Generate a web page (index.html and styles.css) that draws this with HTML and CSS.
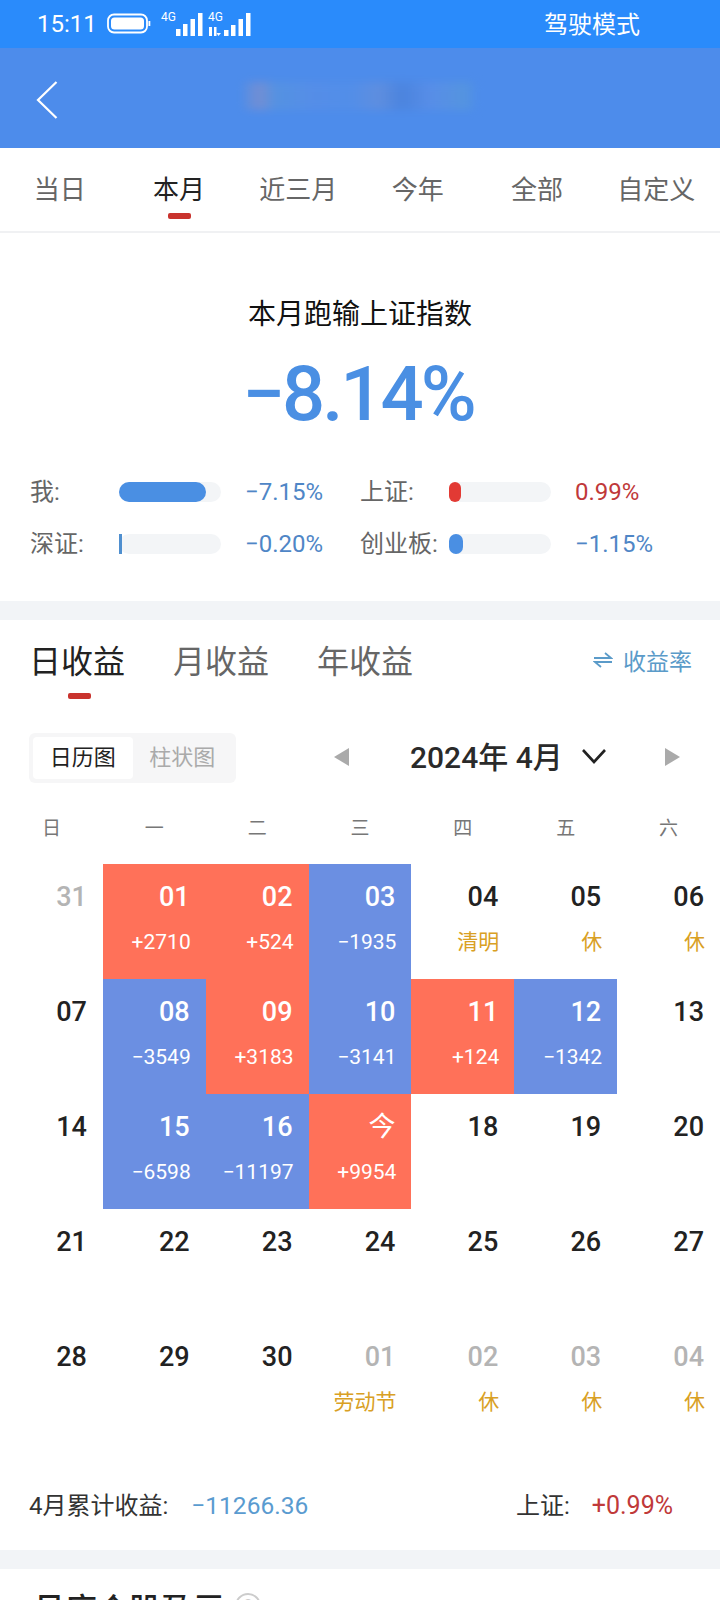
FILE: index.html
```html
<!DOCTYPE html>
<html lang="zh-CN">
<head>
<meta charset="UTF-8">
<meta name="viewport" content="width=device-width, initial-scale=1.0">
<title>收益日历</title>
<link rel="stylesheet" href="styles.css">
</head>
<body>
<div class="page">
    <div class="status-bar">
        <span class="time">15:11</span>
        <svg class="status-icons" width="146" height="26" viewBox="0 0 146 26">
            <rect x="1" y="3.5" width="39" height="18" rx="6" fill="none" stroke="#fff" stroke-width="1.8"/>
            <rect x="4" y="6.5" width="33" height="12" rx="3.5" fill="#fff"/>
            <rect x="41.5" y="10" width="1.8" height="5" fill="#fff"/>
            <text x="54" y="10" class="net">4G</text>
            <rect x="69" y="18" width="4.5" height="7" fill="#fff"/>
            <rect x="76" y="13" width="4.5" height="12" fill="#fff"/>
            <rect x="83.5" y="8" width="4.5" height="17" fill="#fff"/>
            <rect x="91" y="2" width="4.5" height="23" fill="#fff"/>
            <text x="101" y="10" class="net">4G</text>
            <rect x="102" y="16" width="3" height="9" fill="#fff"/>
            <rect x="107" y="16" width="2.5" height="9" fill="#fff"/>
            <path d="M109.5 22 H114 L111.5 25 Z" fill="#fff"/>
            <rect x="117" y="19" width="4.5" height="6" fill="#fff"/>
            <rect x="124" y="14" width="4.5" height="11" fill="#fff"/>
            <rect x="131.5" y="8" width="4.5" height="17" fill="#fff"/>
            <rect x="139" y="2" width="4.5" height="23" fill="#fff"/>
        </svg>
        <span class="drive-mode">驾驶模式</span>
    </div>

    <div class="header">
        <svg class="back" width="22" height="40" viewBox="0 0 22 40">
            <path d="M20.5 2 L2 20 L20.5 38" fill="none" stroke="#fff" stroke-width="2.2"/>
        </svg>
        <div class="blurred-title"></div>
    </div>

    <div class="range-tabs">
        <span class="range-tab">当日</span>
        <span class="range-tab active">本月</span>
        <span class="range-tab">近三月</span>
        <span class="range-tab">今年</span>
        <span class="range-tab">全部</span>
        <span class="range-tab">自定义</span>
    </div>

    <div class="summary">
        <div class="summary-title">本月跑输上证指数</div>
        <div class="summary-value">−8.14%</div>
        <div class="compare">
            <div class="compare-item">
                <span class="compare-label">我:</span>
                <span class="track"><span class="fill blue" style="width: 85%"></span></span>
                <span class="compare-value fall">−7.15%</span>
            </div>
            <div class="compare-item">
                <span class="compare-label">上证:</span>
                <span class="track"><span class="fill red" style="width: 12%"></span></span>
                <span class="compare-value rise">0.99%</span>
            </div>
            <div class="compare-item">
                <span class="compare-label">深证:</span>
                <span class="track"><span class="fill blue thin" style="width: 3px"></span></span>
                <span class="compare-value fall">−0.20%</span>
            </div>
            <div class="compare-item">
                <span class="compare-label">创业板:</span>
                <span class="track"><span class="fill blue" style="width: 14%"></span></span>
                <span class="compare-value fall">−1.15%</span>
            </div>
        </div>
    </div>

    <div class="divider"></div>

    <div class="calendar-card">
        <div class="profit-tabs">
            <span class="profit-tab active">日收益</span>
            <span class="profit-tab">月收益</span>
            <span class="profit-tab">年收益</span>
            <span class="rate-link">
                <svg width="20" height="16" viewBox="0 0 20 16">
                    <path d="M1 6 H18 L12 1 M19 10 H2 L8 15" fill="none" stroke="#5b9bc9" stroke-width="1.8"/>
                </svg>
                收益率
            </span>
        </div>

        <div class="toolbar">
            <div class="segment">
                <span class="segment-item active">日历图</span>
                <span class="segment-item">柱状图</span>
            </div>
            <div class="month-picker">
                <span class="arrow-left"></span>
                <span class="month-label">2024年 4月</span>
                <svg class="chevron" width="26" height="16" viewBox="0 0 26 16">
                    <path d="M2 2 L13 14 L24 2" fill="none" stroke="#222" stroke-width="2.6"/>
                </svg>
                <span class="arrow-right"></span>
            </div>
        </div>

        <div class="week-row">
            <span>日</span><span>一</span><span>二</span><span>三</span><span>四</span><span>五</span><span>六</span>
        </div>

        <div class="days">
            <div class="day muted"><b>31</b></div>
            <div class="day up"><b>01</b><i>+2710</i></div>
            <div class="day up"><b>02</b><i>+524</i></div>
            <div class="day down"><b>03</b><i>−1935</i></div>
            <div class="day"><b>04</b><i class="holiday">清明</i></div>
            <div class="day"><b>05</b><i class="holiday">休</i></div>
            <div class="day"><b>06</b><i class="holiday">休</i></div>

            <div class="day"><b>07</b></div>
            <div class="day down"><b>08</b><i>−3549</i></div>
            <div class="day up"><b>09</b><i>+3183</i></div>
            <div class="day down"><b>10</b><i>−3141</i></div>
            <div class="day up"><b>11</b><i>+124</i></div>
            <div class="day down"><b>12</b><i>−1342</i></div>
            <div class="day"><b>13</b></div>

            <div class="day"><b>14</b></div>
            <div class="day down"><b>15</b><i>−6598</i></div>
            <div class="day down"><b>16</b><i>−11197</i></div>
            <div class="day up"><b class="today">今</b><i>+9954</i></div>
            <div class="day"><b>18</b></div>
            <div class="day"><b>19</b></div>
            <div class="day"><b>20</b></div>

            <div class="day"><b>21</b></div>
            <div class="day"><b>22</b></div>
            <div class="day"><b>23</b></div>
            <div class="day"><b>24</b></div>
            <div class="day"><b>25</b></div>
            <div class="day"><b>26</b></div>
            <div class="day"><b>27</b></div>

            <div class="day"><b>28</b></div>
            <div class="day"><b>29</b></div>
            <div class="day"><b>30</b></div>
            <div class="day muted"><b>01</b><i class="holiday">劳动节</i></div>
            <div class="day muted"><b>02</b><i class="holiday">休</i></div>
            <div class="day muted"><b>03</b><i class="holiday">休</i></div>
            <div class="day muted"><b>04</b><i class="holiday">休</i></div>
        </div>

        <div class="total">
            <span>4月累计收益:<em class="fall">−11266.36</em></span>
            <span class="total-index">上证:<em class="rise">+0.99%</em></span>
        </div>
    </div>

    <div class="divider"></div>

    <div class="next-card">
        <span class="next-title">月度个股盈亏</span>
        <span class="help">?</span>
    </div>
</div>
</body>
</html>
```

FILE: styles.css
```css
* {
    box-sizing: border-box;
}
html, body {
    margin: 0;
    padding: 0;
    background-color: #fff;
}
body {
    font-family: Roboto, "Noto Sans CJK SC", sans-serif;
    color: #222;
}
.page {
    width: 720px;
    height: 1600px;
    overflow: hidden;
}

/* status bar + header */
.status-bar {
    height: 48px;
    background-color: #2a8bfb;
    color: #fff;
    display: flex;
    align-items: center;
    padding-left: 37px;
}
.time {
    font-size: 24px;
    width: 70px;
}
.status-icons {
    display: block;
}
.net {
    font-family: Roboto, sans-serif;
    font-size: 12px;
    fill: #fff;
}
.drive-mode {
    margin-left: auto;
    margin-right: 80px;
    margin-bottom: 4px;
    font-size: 24px;
}
.header {
    height: 100px;
    background-color: #4d8ceb;
    display: flex;
    align-items: center;
    position: relative;
    padding-left: 36px;
}
.back {
    margin-top: 4px;
}
.blurred-title {
    position: absolute;
    left: 243px;
    top: 34px;
    width: 234px;
    height: 28px;
    filter: blur(4px);
    opacity: 0.6;
    background: linear-gradient(90deg, #5a90e0 0%, #8c90c4 7%, #5a96dc 14%, #5b8fe6 30%, #5590e8 45%, #6a90d8 58%, #4a7fd6 68%, #5f8fe6 80%, #5a9ad8 95%, #4d8ceb 100%);
}

/* range tabs */
.range-tabs {
    height: 85px;
    display: grid;
    grid-template-columns: repeat(6, 1fr);
    padding-right: 4px;
    border-bottom: 2px solid #f0f1f3;
}
.range-tab {
    font-size: 26px;
    color: #666;
    text-align: center;
    padding-top: 21px;
    position: relative;
}
.range-tab.active {
    color: #222;
}
.range-tab.active::after {
    content: "";
    position: absolute;
    left: 49px;
    bottom: 12px;
    width: 23px;
    height: 6px;
    border-radius: 2px;
    background-color: #c9332e;
}

/* summary */
.summary {
    height: 368px;
    padding: 62px 30px 0;
}
.summary-title {
    font-size: 28px;
    line-height: 40px;
    text-align: center;
    color: #111;
}
.summary-value {
    font-size: 76px;
    font-weight: 500;
    line-height: 90px;
    margin-top: 14px;
    padding-right: 4px;
    text-align: center;
    color: #4a8fe3;
    letter-spacing: -3px;
}
.compare {
    margin-top: 42px;
    display: grid;
    grid-template-columns: 330px 1fr;
    row-gap: 31px;
}
.compare-item {
    display: flex;
    align-items: center;
    height: 21px;
}
.compare-label {
    width: 89px;
    padding-bottom: 4px;
    font-size: 24px;
    color: #666;
    white-space: nowrap;
}
.track {
    width: 102px;
    height: 20px;
    border-radius: 10px;
    background-color: #f3f5f7;
}
.fill {
    display: block;
    height: 100%;
    border-radius: 10px;
}
.fill.blue {
    background-color: #4a8fe3;
}
.fill.red {
    background-color: #e23a34;
}
.fill.thin {
    background-color: #4f8fcf;
    border-radius: 0;
}
.compare-value {
    margin-left: 24px;
    padding-top: 1px;
    font-size: 24px;
}
.fall {
    color: #4f86c6;
}
.rise {
    color: #c0393a;
}

.divider {
    height: 19px;
    background-color: #f2f4f7;
}

/* profit calendar */
.calendar-card {
    height: 930px;
}
.profit-tabs {
    height: 80px;
    display: flex;
    align-items: flex-start;
    gap: 48px;
    padding: 20px 28px 0 29px;
}
.profit-tab {
    font-size: 32px;
    line-height: 44px;
    color: #666;
    position: relative;
}
.profit-tab.active {
    color: #222;
}
.profit-tab.active::after {
    content: "";
    position: absolute;
    left: 39px;
    top: 53px;
    width: 23px;
    height: 6px;
    border-radius: 2px;
    background-color: #c9332e;
}
.rate-link {
    margin-left: auto;
    height: 40px;
    font-size: 23px;
    color: #5b9bc9;
    display: flex;
    align-items: center;
    gap: 10px;
}
.toolbar {
    margin-top: 33px;
    padding-left: 29px;
    display: flex;
    align-items: center;
}
.segment {
    width: 207px;
    height: 50px;
    padding: 4px;
    border-radius: 6px;
    background-color: #f6f6f7;
    display: flex;
}
.segment-item {
    width: 100px;
    font-size: 22px;
    line-height: 42px;
    text-align: center;
    color: #aaa;
}
.segment-item.active {
    background-color: #fff;
    border-radius: 4px;
    color: #222;
}
.month-picker {
    margin-left: 98px;
    display: flex;
    align-items: center;
}
.arrow-left, .arrow-right {
    width: 0;
    height: 0;
    margin-bottom: 2px;
    border-top: 9px solid transparent;
    border-bottom: 9px solid transparent;
}
.arrow-left {
    border-right: 15px solid #aaa;
}
.arrow-right {
    border-left: 15px solid #aaa;
    margin-left: 58px;
}
.month-label {
    font-size: 30px;
    font-weight: 500;
    margin-left: 61px;
    margin-bottom: 6px;
    color: #2a2a2a;
}
.chevron {
    margin-left: 18px;
    margin-bottom: 4px;
}
.week-row {
    margin-top: 29px;
    display: grid;
    grid-template-columns: repeat(7, 1fr);
    text-align: center;
    font-size: 19px;
    line-height: 34px;
    color: #777;
}
.days {
    margin-top: 18px;
    display: grid;
    grid-template-columns: repeat(7, 1fr);
    grid-auto-rows: 115px;
}
.day {
    padding: 15px 15px 0 0;
    text-align: right;
    color: #222;
}
.day b {
    display: block;
    padding-right: 1px;
    font-size: 27px;
    font-weight: 500;
    line-height: 36px;
}
.day i {
    display: block;
    margin-top: 9px;
    font-size: 21px;
    font-style: normal;
    line-height: 36px;
}
.day.up {
    background-color: #ff7159;
    color: #fff;
}
.day.down {
    background-color: #6b8fe2;
    color: #fff;
}
.day.muted b {
    color: #b4b4b4;
}
.day .holiday {
    color: #d9a024;
}
.day .today {
    font-weight: 400;
}
.total {
    margin-top: 49px;
    padding: 0 47px 0 29px;
    display: flex;
    justify-content: space-between;
    font-size: 24px;
    line-height: 36px;
    color: #333;
}
.total em {
    font-style: normal;
    font-size: 25px;
    margin-left: 22px;
}
.total .fall {
    color: #5a9bd0;
    font-size: 24.5px;
    margin-left: 23px;
}
.next-card {
    padding: 21px 0 0 33px;
    display: flex;
    align-items: flex-start;
    gap: 10px;
}
.next-title {
    font-size: 32px;
    font-weight: 500;
    line-height: 40px;
}
.help {
    width: 26px;
    height: 26px;
    margin-top: 3px;
    border: 2px solid #ccc;
    border-radius: 50%;
    font-size: 18px;
    line-height: 22px;
    text-align: center;
    color: #ccc;
}
```
